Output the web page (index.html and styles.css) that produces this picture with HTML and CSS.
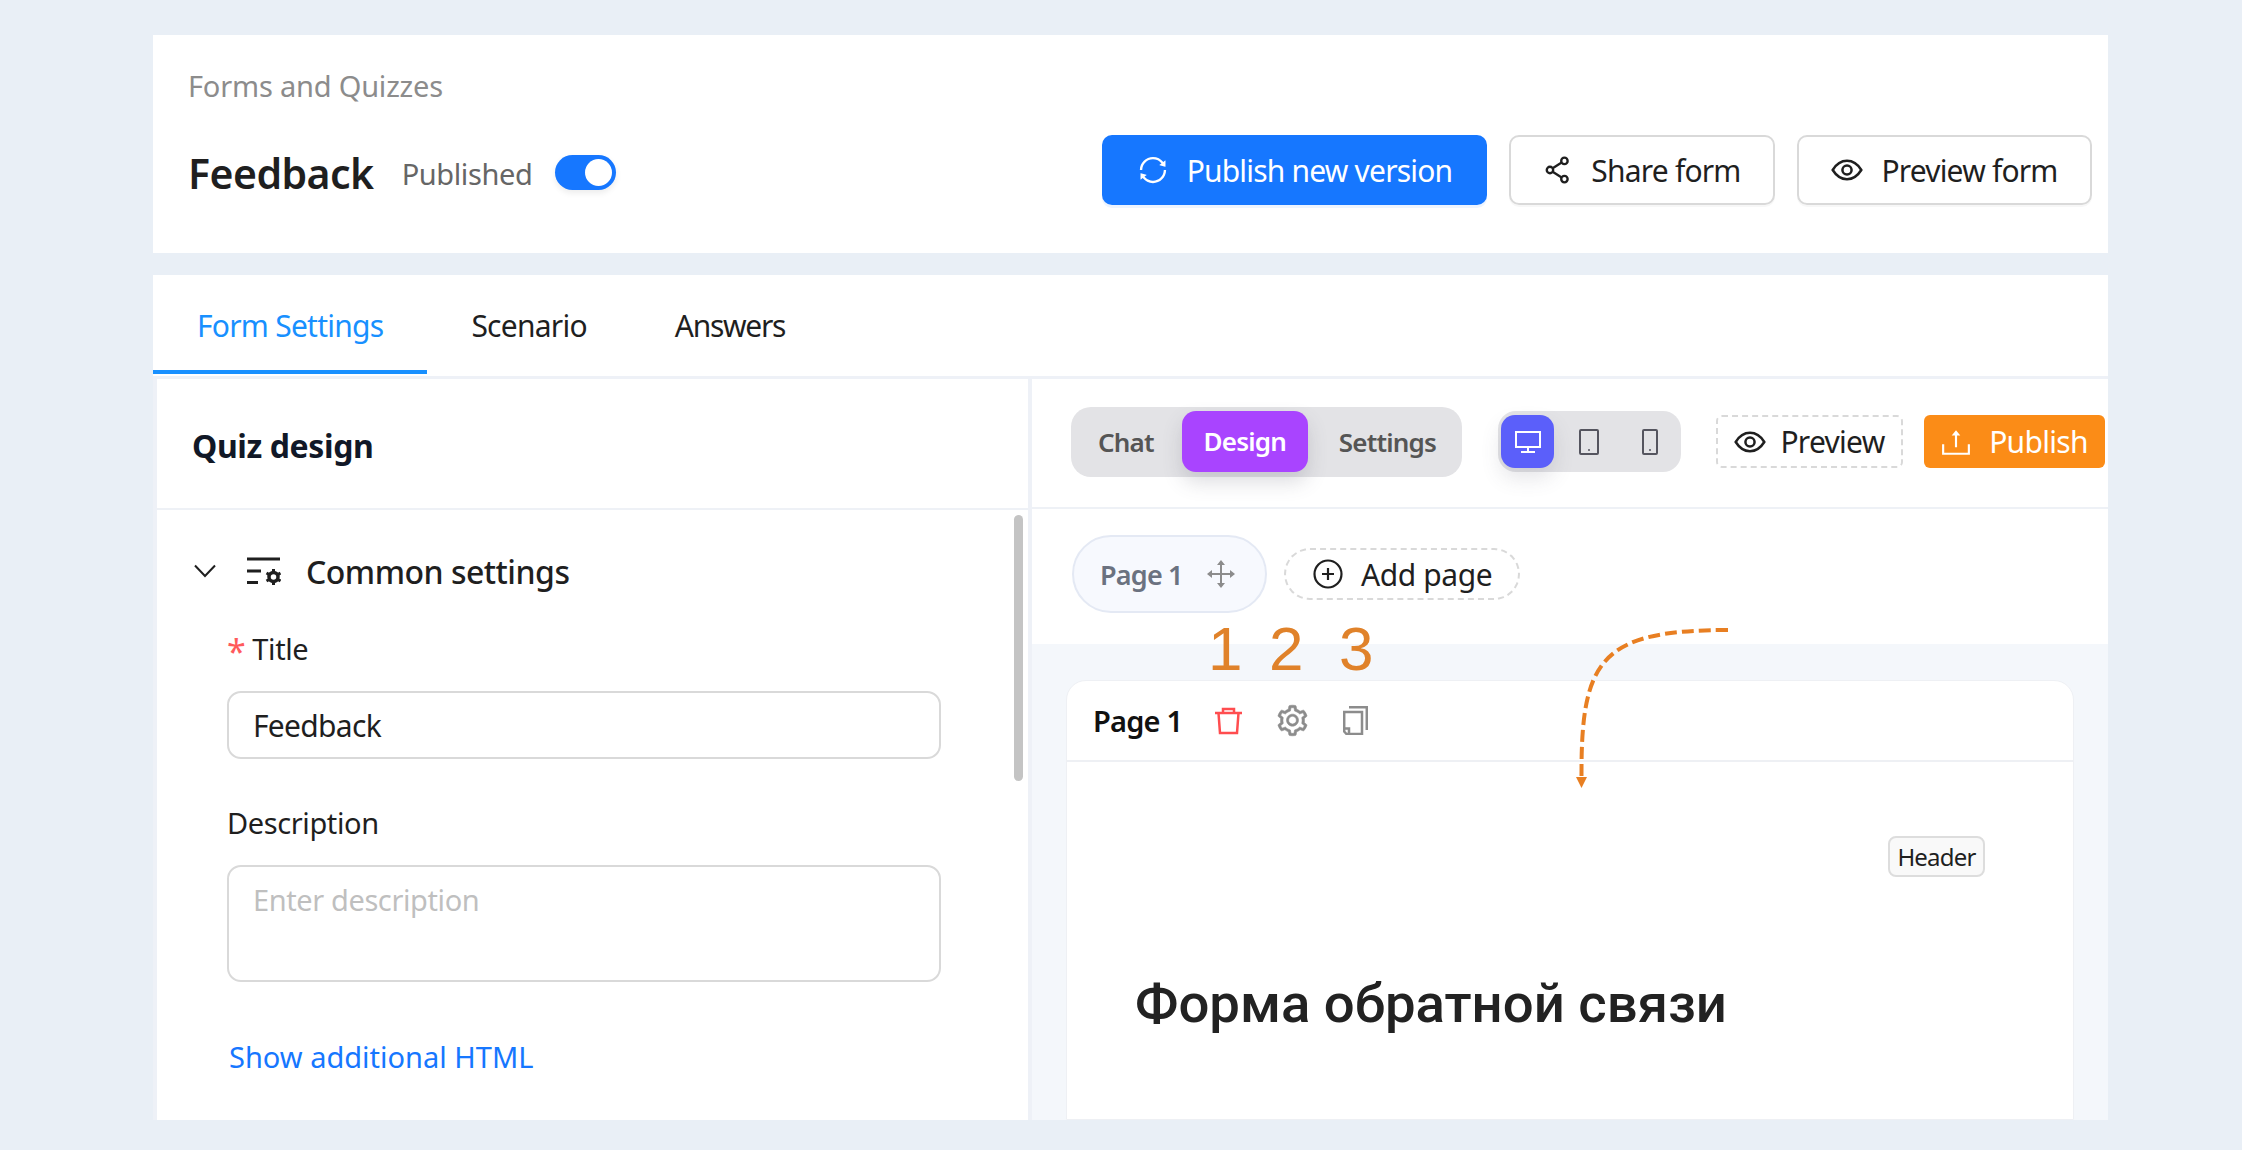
FILE: index.html
```html
<!DOCTYPE html>
<html lang="en">

<head>
     <meta charset="UTF-8">
     <title>Forms and Quizzes - Feedback</title>
     <link rel="stylesheet" href="styles.css">
</head>

<body>
     <!-- page header -->
     <header class="top-card">
          <div class="crumb">Forms and Quizzes</div>
          <div class="top-row">
               <div class="top-title">
                    <h1 class="form-name">Feedback</h1>
                    <span class="status">Published</span>
                    <span class="toggle"><span class="knob"></span></span>
               </div>
               <div class="top-actions">
                    <button class="btn btn-blue">
                         <svg class="ic-32" viewBox="0 0 1024 1024" fill="currentColor"><path d="M168 504.2c1-43.7 10-86.1 26.9-126 17.3-41 42.1-77.7 73.7-109.4S337 212.3 378 195c42.4-17.9 87.4-27 133.9-27s91.5 9.1 133.8 27A341.5 341.5 0 0 1 755 268.8c9.9 9.9 19.2 20.4 27.8 31.4l-60.2 47a8 8 0 0 0 3 14.1l175.7 43c5 1.2 9.9-2.6 9.9-7.7l.8-180.9c0-6.7-7.7-10.5-12.9-6.3l-56.4 44.1C765.8 155.1 646.2 92 511.8 92 282.7 92 96.3 275.6 92 503.8a8 8 0 0 0 8 8.2h60c4.4 0 7.9-3.5 8-7.8zm756 7.8h-60c-4.4 0-7.9 3.5-8 7.8-1 43.7-10 86.1-26.9 126-17.3 41-42.1 77.8-73.7 109.4A342.45 342.45 0 0 1 512.1 856a342.24 342.24 0 0 1-243.2-100.8c-9.9-9.9-19.2-20.4-27.8-31.4l60.2-47a8 8 0 0 0-3-14.1l-175.7-43c-5-1.2-9.9 2.6-9.9 7.7l-.7 181c0 6.7 7.7 10.5 12.9 6.3l56.4-44.1C258.2 868.9 377.8 932 512.2 932c229.2 0 415.5-183.7 419.8-411.8a8 8 0 0 0-8-8.2z"/></svg>
                         Publish new version
                    </button>
                    <button class="btn btn-white">
                         <svg class="ic-30" viewBox="0 0 28 28" fill="none" stroke="currentColor" stroke-width="2.2"><circle cx="20" cy="5.5" r="3"/><circle cx="6.5" cy="14" r="3"/><circle cx="20" cy="22.5" r="3"/><path d="M9 12.4 17.4 7.1M9 15.6l8.4 5.3"/></svg>
                         Share form
                    </button>
                    <button class="btn btn-white">
                         <svg class="ic-32" viewBox="0 0 28 28" fill="none" stroke="currentColor" stroke-width="2.2"><path d="M1.5 14C5 8.3 9 6 14 6s9 2.3 12.5 8C23 19.7 19 22 14 22S5 19.7 1.5 14z"/><circle cx="14" cy="14" r="4"/></svg>
                         Preview form
                    </button>
               </div>
          </div>
     </header>

     <main class="main-card">
          <nav class="tabs">
               <a class="tab tab-active">Form Settings</a>
               <a class="tab">Scenario</a>
               <a class="tab">Answers</a>
          </nav>

          <div class="split">
               <!-- left settings column -->
               <section class="side">
                    <h2 class="side-title">Quiz design</h2>
                    <div class="side-body">
                         <div class="scroll-thumb"></div>
                         <div class="group-head">
                              <svg class="chevron" viewBox="0 0 22 14" fill="none" stroke="currentColor" stroke-width="2"><path d="M1 1.5 11 12 21 1.5"/></svg>
                              <svg class="settings-ic" viewBox="0 0 34 28" fill="none" stroke="currentColor" stroke-width="3"><path d="M0 2h33M0 14h14M0 25.5h11"/><circle cx="26.5" cy="20" r="4.5" stroke-width="3.5"/><path d="M26.5 12v4M26.5 24v4M19.5 16l3.5 2M30 22l3.5 2M33.5 16 30 18M23 22l-3.5 2" stroke-width="3"/></svg>
                              <span class="group-name">Common settings</span>
                         </div>
                         <label class="field-label"><span class="req">*</span><span class="label-text">Title</span></label>
                         <div class="input">Feedback</div>
                         <label class="field-label label-desc">Description</label>
                         <div class="input input-area">Enter description</div>
                         <a class="more-link">Show additional HTML</a>
                    </div>
               </section>

               <!-- right editor column -->
               <section class="editor">
                    <div class="toolbar">
                         <div class="seg">
                              <span class="seg-item">Chat</span>
                              <span class="seg-item seg-active">Design</span>
                              <span class="seg-item">Settings</span>
                         </div>
                         <div class="devices">
                              <span class="dev dev-active">
                                   <svg width="26" height="22" viewBox="0 0 26 22" fill="none" stroke="currentColor" stroke-width="2"><rect x="1" y="1" width="24" height="15"/><path d="M13 16v5M6 21h14"/></svg>
                              </span>
                              <span class="dev">
                                   <svg width="20" height="26" viewBox="0 0 20 26" fill="none" stroke="currentColor" stroke-width="2"><rect x="1" y="1" width="18" height="24" rx="1"/><circle cx="10" cy="21" r="1" fill="currentColor" stroke="none"/></svg>
                              </span>
                              <span class="dev">
                                   <svg width="16" height="26" viewBox="0 0 16 26" fill="none" stroke="currentColor" stroke-width="2"><rect x="1" y="1" width="14" height="24" rx="1"/><circle cx="8" cy="21" r="1" fill="currentColor" stroke="none"/></svg>
                              </span>
                         </div>
                         <button class="tool-btn tool-preview">
                              <svg class="ic-32" viewBox="0 0 28 28" fill="none" stroke="currentColor" stroke-width="2.2"><path d="M1.5 14C5 8.3 9 6 14 6s9 2.3 12.5 8C23 19.7 19 22 14 22S5 19.7 1.5 14z"/><circle cx="14" cy="14" r="4"/></svg>
                              Preview
                         </button>
                         <button class="tool-btn tool-publish">
                              <svg class="ic-30" viewBox="0 0 28 28" fill="none" stroke="currentColor" stroke-width="2"><path d="M14 19V5M2 16v9h24v-9"/><path d="M10 8l4-5 4 5z" fill="currentColor" stroke="none"/></svg>
                              Publish
                         </button>
                    </div>

                    <div class="pages">
                         <span class="page-pill">
                              Page 1
                              <svg class="move-ic" width="28" height="28" viewBox="0 0 28 28" fill="none" stroke="currentColor" stroke-width="2"><path d="M14 2v24M2 14h24"/><path d="M14 0l4 5h-8zM14 28l4-5h-8zM0 14l5-4v8zM28 14l-5-4v8z" fill="currentColor" stroke="none"/></svg>
                         </span>
                         <span class="add-page">
                              <svg width="30" height="30" viewBox="0 0 30 30" fill="none" stroke="currentColor" stroke-width="2.2"><circle cx="15" cy="15" r="13.5"/><path d="M15 9v12M9 15h12"/></svg>
                              Add page
                         </span>
                    </div>

                    <div class="canvas">
                         <div class="page-card">
                              <div class="page-head">
                                   <span class="page-name">Page 1</span>
                                   <svg class="act-trash" width="27" height="28" viewBox="0 0 27 28" fill="none" stroke="currentColor" stroke-width="2.5"><path d="M0 6h27M8 6V2h11v4M3.5 6l1.500 20h17l1.500-20"/></svg>
                                   <svg class="act-gear" width="35" height="35" viewBox="0 0 1024 1024" fill="currentColor" stroke="currentColor" stroke-width="16"><path d="M924.800 625.700l-65.500-56c3.100-19 4.700-38.400 4.700-57.800s-1.600-38.800-4.700-57.800l65.500-56a32.030 32.030 0 0 0 9.300-35.200l-.9-2.600a443.740 443.740 0 0 0-79.700-137.900l-1.800-2.100a32.120 32.120 0 0 0-35.100-9.500l-81.300 28.900c-30-24.600-63.500-44-99.700-57.600l-15.700-85a32.050 32.050 0 0 0-25.800-25.700l-2.700-.5c-52.100-9.400-106.900-9.400-159 0l-2.700.5a32.050 32.050 0 0 0-25.800 25.700l-15.800 85.400a351.860 351.860 0 0 0-99 57.400l-81.900-29.100a32 32 0 0 0-35.100 9.500l-1.800 2.100a446.020 446.020 0 0 0-79.700 137.900l-.9 2.600c-4.500 12.500-.8 26.500 9.300 35.200l66.300 56.600c-3.100 18.800-4.600 38-4.600 57.100 0 19.200 1.500 38.400 4.600 57.100L99 625.500a32.030 32.030 0 0 0-9.300 35.200l.9 2.600c18.100 50.400 44.900 96.900 79.700 137.900l1.800 2.100a32.120 32.120 0 0 0 35.100 9.500l81.900-29.100c29.800 24.500 63.100 43.900 99 57.400l15.800 85.400a32.050 32.050 0 0 0 25.800 25.700l2.700.5a449.400 449.400 0 0 0 159 0l2.700-.5a32.050 32.050 0 0 0 25.800-25.700l15.700-85a350 350 0 0 0 99.700-57.600l81.300 28.900a32 32 0 0 0 35.100-9.500l1.800-2.100c34.800-41.100 61.600-87.500 79.700-137.900l.9-2.600c4.500-12.300.8-26.300-9.300-35zM788.300 465.900c2.500 15.100 3.800 30.600 3.800 46.100s-1.300 31-3.800 46.100l-6.600 40.100 74.700 63.900a370.030 370.030 0 0 1-42.600 73.600L721 702.800l-31.400 25.800c-23.900 19.600-50.500 35-79.300 45.800l-38.100 14.300-17.900 97a377.500 377.500 0 0 1-85 0l-17.900-97.200-37.800-14.500c-28.500-10.800-55-26.200-78.700-45.700l-31.400-25.900-93.400 33.200c-17-22.900-31.200-47.600-42.600-73.600l75.500-64.500-6.500-40c-2.400-14.900-3.700-30.300-3.700-45.500 0-15.300 1.200-30.600 3.700-45.500l6.500-40-75.500-64.500c11.300-26.100 25.600-50.700 42.600-73.600l93.400 33.200 31.400-25.900c23.700-19.500 50.200-34.900 78.700-45.700l37.900-14.300 17.900-97.200c28.100-3.200 56.800-3.200 85 0l17.900 97 38.100 14.300c28.700 10.800 55.400 26.200 79.300 45.800l31.400 25.800 92.800-32.900c17 22.900 31.200 47.600 42.600 73.600L781.800 426l6.500 39.900zM512 326c-97.200 0-176 78.800-176 176s78.800 176 176 176 176-78.800 176-176-78.800-176-176-176zm79.200 255.200A111.600 111.600 0 0 1 512 614c-29.900 0-58-11.700-79.200-32.800A111.600 111.600 0 0 1 400 502c0-29.900 11.700-58 32.800-79.200C454 401.600 482.100 390 512 390c29.900 0 58 11.600 79.200 32.800A111.600 111.600 0 0 1 624 502c0 29.900-11.700 58-32.800 79.200z"/></svg>
                                   <svg class="act-copy" width="25" height="29" viewBox="0 0 25 29" fill="none" stroke="currentColor" stroke-width="2.5"><path d="M6 1.200h17.800V24"/><path d="M7 28H3.500L1.200 25.500V6H19v22z"/><path d="M1.200 22.500H6v5"/></svg>
                              </div>
                              <div class="page-body">
                                   <span class="header-tag">Header</span>
                                   <h3 class="form-heading">Форма обратной связи</h3>
                              </div>
                         </div>
                    </div>

                    <!-- orange notes put over the screenshot -->
                    <span class="note note-1">1</span>
                    <span class="note note-2">2</span>
                    <span class="note note-3">3</span>
                    <svg class="note-arrow" width="160" height="165" viewBox="0 0 160 165" fill="none">
                         <path d="M155 2C27 2 8 32 8.500 149" stroke="#e87f22" stroke-width="4" stroke-dasharray="12 5"/>
                         <path d="M3 149h11l-5.500 11z" fill="#e87f22"/>
                    </svg>
               </section>
          </div>
     </main>
</body>

</html>
```

FILE: styles.css
```css
* {
     padding: 0;
     margin: 0;
     box-sizing: border-box;
     font-family: 'Noto Sans', 'Open Sans', sans-serif;
}

body {
     height: 1150px;
     padding: 35px 134px 30px 153px;
     background: #e9eff6;
     color: #1f1f1f;
     display: flex;
     flex-direction: column;
     gap: 22px;
     overflow: hidden;
}

button {
     border: none;
     background: none;
     color: inherit;
}

.ic-30 {
     width: 30px;
     height: 30px;
     flex: none;
}

.ic-32 {
     width: 32px;
     height: 32px;
     flex: none;
}

/* top card */
.top-card {
     height: 218px;
     flex: none;
     background: white;
     padding: 32px 16px 0 35px;
}

.crumb {
     font-size: 29px;
     line-height: 38px;
     color: #8c8c8c;
     letter-spacing: -.2px;
}

.top-row {
     display: flex;
     align-items: center;
     justify-content: space-between;
     margin-top: 30px;
     height: 70px;
}

.top-title {
     display: flex;
     align-items: center;
     padding-top: 5px;
}

.form-name {
     font-size: 41px;
     font-weight: 600;
     letter-spacing: -.55px;
     color: #1f1f1f;
}

.status {
     font-size: 29px;
     color: #666;
     margin: 2px 0 0 28px;
     letter-spacing: -.4px;
}

.toggle {
     width: 61px;
     height: 35px;
     border-radius: 18px;
     background: #1677ff;
     margin-left: 23px;
     display: flex;
     align-items: center;
     justify-content: flex-end;
     padding-right: 4px;
     box-shadow: 0 3px 6px rgba(0, 0, 0, .08);
}

.knob {
     width: 27px;
     height: 27px;
     border-radius: 50%;
     background: white;
}

.top-actions {
     display: flex;
     gap: 22px;
}

.btn {
     height: 70px;
     border-radius: 10px;
     display: flex;
     align-items: center;
     justify-content: center;
     gap: 18px;
     font-size: 30px;
     letter-spacing: -.8px;
}

.btn-blue {
     width: 385px;
     background: #1677ff;
     color: white;
     box-shadow: 0 3px 0 rgba(22, 119, 255, .08);
}

.btn-white {
     width: 266px;
     border: 2px solid #d9d9d9;
     box-shadow: 0 2px 0 rgba(0, 0, 0, .03);
}

.btn-white:last-child {
     width: 295px;
}

/* tabs and columns */
.main-card {
     flex: 1;
     min-height: 0;
     background: white;
     display: flex;
     flex-direction: column;
}

.tabs {
     height: 101px;
     flex: none;
     display: flex;
}

.tab {
     padding: 0 44px;
     font-size: 30px;
     line-height: 102px;
     letter-spacing: -.75px;
     height: 99px;
}

.tab:last-child {
     letter-spacing: -1.3px;
}

.tab-active {
     color: #1890ff;
     border-bottom: 4px solid #1890ff;
}

.split {
     flex: 1;
     min-height: 0;
     display: grid;
     grid-template-columns: 871px 1fr;
     column-gap: 4px;
     padding: 3px 0 0 4px;
     background: #eef1f7;
}

/* left column */
.side {
     background: white;
     display: flex;
     flex-direction: column;
     min-height: 0;
}

.side-title {
     height: 131px;
     flex: none;
     padding-left: 35px;
     font-size: 32px;
     line-height: 133px;
     font-weight: 700;
     letter-spacing: -.4px;
     color: #111827;
     border-bottom: 2px solid #eef1f6;
}

.side-body {
     flex: 1;
     position: relative;
     padding: 38px 0 0 37px;
}

.scroll-thumb {
     position: absolute;
     left: 857px;
     top: 5px;
     width: 9px;
     height: 266px;
     border-radius: 5px;
     background: #c4c4c4;
}

.group-head {
     display: flex;
     align-items: center;
     height: 46px;
}

.chevron {
     width: 22px;
     height: 14px;
     flex: none;
}

.settings-ic {
     width: 34px;
     height: 28px;
     margin-left: 31px;
     flex: none;
}

.group-name {
     margin-left: 25px;
     font-size: 32px;
     font-weight: 500;
     letter-spacing: -.5px;
}

.field-label {
     display: block;
     margin: 34px 0 0 33px;
     font-size: 29px;
     line-height: 42px;
     letter-spacing: -.4px;
}

.req {
     color: #ff5a5c;
     font-size: 34px;
     line-height: 0;
     vertical-align: -4px;
}

.label-text {
     margin-left: 7px;
}

.input {
     width: 714px;
     height: 68px;
     margin: 21px 0 0 33px;
     padding-left: 24px;
     border: 2px solid #d9d9d9;
     border-radius: 14px;
     font-size: 30px;
     line-height: 66px;
     letter-spacing: -.7px;
}

.label-desc {
     margin-top: 43px;
}

.input-area {
     height: 117px;
     margin-top: 21px;
     font-size: 29px;
     line-height: 66px;
     letter-spacing: -.4px;
     color: #bfbfbf;
}

.more-link {
     display: block;
     margin: 54px 0 0 35px;
     font-size: 29px;
     line-height: 42px;
     color: #1677ff;
}

/* right column */
.editor {
     position: relative;
     background: white;
     display: flex;
     flex-direction: column;
     min-height: 0;
}

.toolbar {
     height: 130px;
     flex: none;
     display: flex;
     align-items: center;
     padding: 0 0 3px 39px;
     border-bottom: 2px solid #eef1f6;
}

.seg {
     width: 391px;
     height: 70px;
     border-radius: 20px;
     background: #e3e3e6;
     display: flex;
     align-items: center;
     padding-left: 27px;
}

.seg-item {
     font-size: 26px;
     font-weight: 600;
     letter-spacing: -.8px;
     color: #555;
}

.seg-active {
     width: 126px;
     height: 61px;
     margin: 0 31px 0 28px;
     border-radius: 14px;
     background: #a944ff;
     color: white;
     text-align: center;
     line-height: 60px;
     box-shadow: 0 10px 20px rgba(80, 80, 100, .2);
}

.devices {
     width: 183px;
     height: 61px;
     margin-left: 36px;
     border-radius: 18px;
     background: #e3e3e6;
     display: flex;
     align-items: center;
     padding-left: 3px;
}

.dev {
     display: flex;
     align-items: center;
     justify-content: center;
     height: 53px;
     width: 53px;
     color: #55555f;
}

.dev:nth-child(2),
.dev:nth-child(3) {
     margin-left: 8px;
}

.dev-active {
     border-radius: 14px;
     background: #5b5ffa;
     color: white;
     box-shadow: 0 10px 20px rgba(80, 80, 100, .15);
}

.tool-btn {
     height: 53px;
     border-radius: 6px;
     display: flex;
     align-items: center;
     justify-content: center;
     gap: 14px;
     font-size: 30px;
     letter-spacing: -.7px;
}

.tool-preview {
     width: 187px;
     margin-left: 35px;
     border: 2px dashed #d9d9d9;
}

.tool-publish {
     width: 181px;
     margin-left: 21px;
     background: #fb8c17;
     color: white;
     gap: 18px;
}

.pages {
     height: 135px;
     flex: none;
     display: flex;
     align-items: center;
     padding: 0 0 5px 40px;
     gap: 17px;
}

.page-pill {
     width: 195px;
     height: 78px;
     border-radius: 39px;
     border: 2px solid #e4e9f4;
     background: #f7f9fe;
     display: flex;
     align-items: center;
     gap: 24px;
     padding-left: 26px;
     font-size: 27px;
     font-weight: 600;
     letter-spacing: -.8px;
     color: #6b7280;
}

.move-ic {
     color: #8c8c8c;
}

.add-page {
     width: 236px;
     height: 52px;
     border-radius: 26px;
     border: 2px dashed #d9d9d9;
     display: flex;
     align-items: center;
     gap: 18px;
     padding-left: 27px;
     font-size: 30px;
     letter-spacing: -.4px;
}

.canvas {
     flex: 1;
     min-height: 0;
     overflow: hidden;
     background: #f4f7fb;
     padding: 36px 34px 0;
}

.page-card {
     height: 100%;
     border-radius: 20px 20px 0 0;
     background: white;
     border: 1px solid #eef0f4;
}

.page-head {
     height: 81px;
     display: flex;
     align-items: center;
     padding-left: 26px;
     border-bottom: 2px solid #eef0f4;
}

.page-name {
     font-size: 29px;
     font-weight: 600;
     letter-spacing: -.8px;
     color: #111;
}

.act-trash {
     margin-left: 33px;
     color: #ff4d4f;
}

.act-gear {
     margin-left: 33px;
     color: #8c8c8c;
}

.act-copy {
     margin-left: 33px;
     color: #8c8c8c;
}

.page-body {
     padding: 74px 88px 0 68px;
}

.header-tag {
     display: block;
     width: 97px;
     height: 41px;
     margin-left: auto;
     border: 2px solid #ddd;
     border-radius: 8px;
     background: #f9f9f9;
     font-size: 24px;
     line-height: 38px;
     text-align: center;
     letter-spacing: -.8px;
}

.form-heading {
     margin-top: 94px;
     font-family: Roboto, sans-serif;
     font-size: 54.5px;
     font-weight: 500;
     color: #222;
}

/* orange notes */
.note {
     position: absolute;
     top: 235px;
     font-family: 'Liberation Sans', sans-serif;
     font-size: 62px;
     line-height: 70px;
     color: #e0822a;
}

.note-1 {
     left: 176px;
}

.note-2 {
     left: 237px;
}

.note-3 {
     left: 307px;
}

.note-arrow {
     position: absolute;
     left: 541px;
     top: 249px;
}
```
